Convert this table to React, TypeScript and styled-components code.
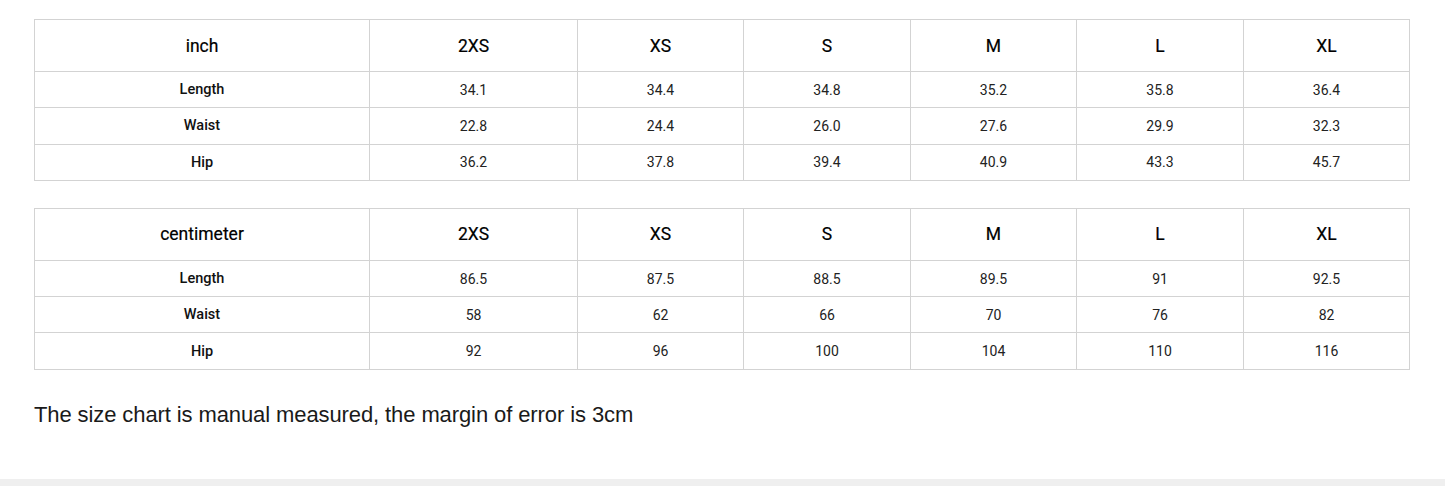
import React from "react";
import styled, { createGlobalStyle } from "styled-components";

const Global = createGlobalStyle`
  html, body { margin: 0; padding: 0; background: #fff; }
  body { font-family: Roboto, "Liberation Sans", sans-serif; color: #111; }
`;

const Page = styled.div`
  display: flex;
  flex-direction: column;
  min-height: 486px;
`;

const Content = styled.div`
  padding: 19px 36px 0 34px;
  display: flex;
  flex-direction: column;
  gap: 27px;
  flex: 1;
`;

const Table = styled.table`
  width: 1375px;
  border-collapse: collapse;
  table-layout: fixed;
`;

const Cell = styled.td<{ $head?: boolean; $label?: boolean }>`
  border: 1px solid #d3d3d3;
  text-align: center;
  vertical-align: middle;
  padding: 0;
  height: ${(p) => (p.$head ? "51px" : "35.3px")};
  font-family: Roboto, "Liberation Sans", sans-serif;
  font-size: ${(p) => (p.$head ? "17.5px" : p.$label ? "14.5px" : "14px")};
  font-weight: ${(p) => (p.$label ? 500 : 400)};
  color: ${(p) => (p.$head ? "#000" : p.$label ? "#111" : "#222")};
  -webkit-text-stroke: ${(p) => (p.$head ? "0.2px #000" : "0")};
`;

const Note = styled.p`
  margin: 5px 0 0;
  font-family: "Liberation Sans", Arial, sans-serif;
  font-size: 22px;
  color: #1a1a1a;
  letter-spacing: -0.1px;
`;

const Footer = styled.div`
  height: 7px;
  background: #efefef;
  margin-top: auto;
`;

const widths = [335, 208, 166, 167, 166, 167, 166];
const sizes = ["2XS", "XS", "S", "M", "L", "XL"];

type Data = { unit: string; rows: [string, string[]][] };

const tables: Data[] = [
  {
    unit: "inch",
    rows: [
      ["Length", ["34.1", "34.4", "34.8", "35.2", "35.8", "36.4"]],
      ["Waist", ["22.8", "24.4", "26.0", "27.6", "29.9", "32.3"]],
      ["Hip", ["36.2", "37.8", "39.4", "40.9", "43.3", "45.7"]],
    ],
  },
  {
    unit: "centimeter",
    rows: [
      ["Length", ["86.5", "87.5", "88.5", "89.5", "91", "92.5"]],
      ["Waist", ["58", "62", "66", "70", "76", "82"]],
      ["Hip", ["92", "96", "100", "104", "110", "116"]],
    ],
  },
];

function SizeTable({ data }: { data: Data }) {
  return (
    <Table>
      <colgroup>
        {widths.map((w, i) => (
          <col key={i} style={{ width: w }} />
        ))}
      </colgroup>
      <tbody>
        <tr>
          <Cell $head>{data.unit}</Cell>
          {sizes.map((s) => (
            <Cell $head key={s}>
              {s}
            </Cell>
          ))}
        </tr>
        {data.rows.map(([label, vals]) => (
          <tr key={label}>
            <Cell $label>{label}</Cell>
            {vals.map((v, i) => (
              <Cell key={i}>{v}</Cell>
            ))}
          </tr>
        ))}
      </tbody>
    </Table>
  );
}

export default function App() {
  return (
    <>
      <Global />
      <Page>
        <Content>
          {tables.map((t) => (
            <SizeTable key={t.unit} data={t} />
          ))}
          <Note>The size chart is manual measured, the margin of error is 3cm</Note>
        </Content>
        <Footer />
      </Page>
    </>
  );
}
